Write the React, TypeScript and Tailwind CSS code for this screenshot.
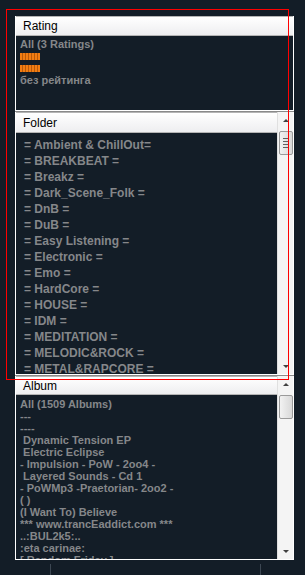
import React from 'react';

const folders = [
  '= Ambient & ChillOut=',
  '= BREAKBEAT =',
  '= Breakz =',
  '= Dark_Scene_Folk =',
  '= DnB =',
  '= DuB =',
  '= Easy Listening =',
  '= Electronic =',
  '= Emo =',
  '= HardCore =',
  '= HOUSE =',
  '= IDM =',
  '= MEDITATION =',
  '= MELODIC&ROCK =',
  '= METAL&RAPCORE =',
];

const albums = [
  'All (1509 Albums)',
  '---',
  '----',
  ' Dynamic Tension EP',
  ' Electric Eclipse',
  '- Impulsion - PoW - 2oo4 -',
  ' Layered Sounds - Cd 1',
  '- PoWMp3 -Praetorian- 2oo2 -',
  '( )',
  '(I Want To) Believe',
  '*** www.trancEaddict.com ***',
  '..:BUL2k5:..',
  ':eta carinae:',
  '[ Random Friday ]',
];

const font = 'font-["Liberation_Sans",Arial,sans-serif]';

const Header = ({ title, h }: { title: string; h: string }) => (
  <div
    className={`${h} flex items-center pl-[7px] bg-gradient-to-b from-white to-[#eeeef0] border-t border-b border-[#b4b4b4] text-[12px] text-black ${font}`}
  >
    {title}
  </div>
);

const Scrollbar = ({ grip }: { grip?: boolean }) => (
  <div className="w-[16px] bg-[#f4f4f4] flex flex-col items-center border-l border-[#e0e0e0]">
    <div className="h-[17px] flex items-center justify-center">
      <div className="w-0 h-0 border-l-[3px] border-r-[3px] border-b-[3px] border-l-transparent border-r-transparent border-b-[#404040]" />
    </div>
    <div className="w-[14px] h-[24px] mt-[2px] rounded-[2px] border border-[#9a9a9a] bg-gradient-to-r from-[#f2f2f2] to-[#d8d8d8] flex flex-col items-center justify-center gap-[2px]">
      {grip && (
        <>
          <div className="w-[6px] h-px bg-[#606060]" />
          <div className="w-[6px] h-px bg-[#606060]" />
          <div className="w-[6px] h-px bg-[#606060]" />
          <div className="w-[6px] h-px bg-[#606060]" />
        </>
      )}
    </div>
    <div className="flex-1" />
    <div className="h-[16px] flex items-center justify-center">
      <div className="w-0 h-0 border-l-[3px] border-r-[3px] border-t-[3px] border-l-transparent border-r-transparent border-t-[#404040]" />
    </div>
  </div>
);

const Bar = () => (
  <div className="h-[12px] flex items-center">
    <div className="w-[20px] h-[7px] bg-[repeating-linear-gradient(90deg,#f27d12_0px,#f27d12_2px,#b8590a_2px,#b8590a_3px)]" />
  </div>
);

export default function App() {
  return (
    <div className={`relative w-[305px] h-[575px] bg-[#131d27] overflow-hidden ${font}`}>
      <div className="pl-[15px] pt-[16px] w-[294px] flex flex-col">
        {/* Rating */}
        <div className="flex flex-col border-l border-r border-white border-b">
          <Header title="Rating" h="h-[20px]" />
          <div className="h-[74px] pt-[2px] pl-[4px] text-[11px] font-bold text-[#85878a] leading-[12px]">
            <div className="h-[12px]">All (3 Ratings)</div>
            <Bar />
            <Bar />
            <div className="h-[12px]">без рейтинга</div>
          </div>
        </div>
        <div className="h-px bg-[#8a8a8a]" />

        {/* Folder */}
        <div className="flex h-[262px] border-l border-r border-white border-t-0">
          <div className="flex-1 flex flex-col min-w-0">
            <Header title="Folder" h="h-[21px]" />
            <div className="flex-1 overflow-hidden pt-[4px] pl-[8px] text-[12px] font-bold text-[#85878a]">
              {folders.map((f) => (
                <div key={f} className="h-[16px] leading-[16px] whitespace-pre">
                  {f}
                </div>
              ))}
            </div>
          </div>
          <Scrollbar grip />
        </div>
        <div className="h-px bg-white" />
        <div className="h-px bg-[#8a8a8a]" />

        {/* Album */}
        <div className="flex h-[184px] border-l border-r border-b border-white">
          <div className="flex-1 flex flex-col min-w-0">
            <Header title="Album" h="h-[19px]" />
            <div className="flex-1 overflow-hidden pt-[3px] pl-[4px] text-[11px] font-bold text-[#85878a]">
              {albums.map((a) => (
                <div key={a} className="h-[12px] leading-[12px] whitespace-pre">
                  {a}
                </div>
              ))}
            </div>
          </div>
          <Scrollbar />
        </div>
      </div>

      {/* bottom ticks */}
      <div className="absolute left-[50px] top-[564px] w-px h-[11px] bg-[#3c4753]" />
      <div className="absolute left-[260px] top-[564px] w-px h-[11px] bg-[#3c4753]" />

      {/* red selection outline */}
      <div className="absolute left-[6px] top-[9px] w-[283px] h-[371px] border border-[#ff0000] pointer-events-none" />
    </div>
  );
}
